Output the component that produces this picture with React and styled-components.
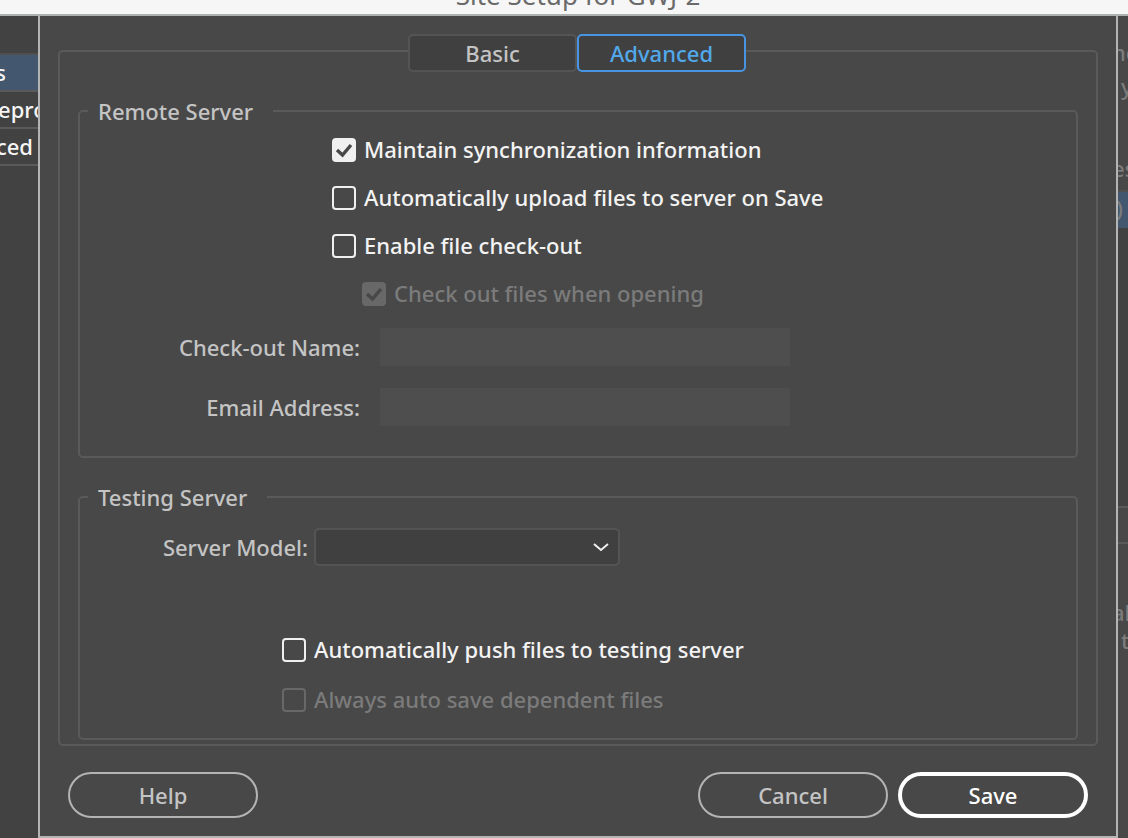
import React from "react";
import styled, { createGlobalStyle } from "styled-components";

const GlobalStyle = createGlobalStyle`
  *, *::before, *::after { box-sizing: border-box; }
  html { background: #484848; }
  body {
    margin: 0;
    overflow: hidden;
    font-family: "Noto Sans", "Open Sans", sans-serif;
    font-size: 22px;
    line-height: 28px;
    color: #c4c4c4;
  }
  button, input, select { font: inherit; color: inherit; }
`;

const Page = styled.div`
  display: flex;
  flex-direction: column;
  min-height: 100vh;
`;

const TitleBar = styled.header`
  display: flex;
  align-items: flex-end;
  justify-content: center;
  height: 16px;
  padding-bottom: 5px;
  overflow: hidden;
  background: #f6f6f6;
  border-bottom: 2px solid #adb1b0;
  color: #6a6a6a;
`;

const Title = styled.h1`
  margin: 0;
  padding-left: 28px;
  font-size: 26px;
  line-height: 28px;
  font-weight: 400;
`;

const Workspace = styled.div`
  flex: 1;
  display: grid;
  grid-template-columns: 38px minmax(0, 1fr) 10px;
`;

const Sidebar = styled.nav`
  padding-top: 37px;
  overflow: hidden;
  background: #424242;
`;

const SidebarList = styled.ul`
  margin: 0;
  padding: 0;
  list-style: none;
  border-top: 2px solid #505050;
`;

const SidebarItem = styled.li`
  display: flex;
  justify-content: ${(p) => p.$align || "flex-start"};
  height: 37px;
  padding: 3px ${(p) => p.$inset || 0}px 0 0;
  overflow: hidden;
  white-space: nowrap;
  border-bottom: 2px solid #5a5a5a;
  background: ${(p) => (p.$active ? "#43586f" : "transparent")};
  color: #f5f5f5;
  font-weight: 500;
  text-indent: -2px;
`;

const Backdrop = styled.aside`
  overflow: hidden;
  background: #484848;
  color: #7c7c7c;
  white-space: nowrap;
  font-weight: 500;
`;

const BackdropText = styled.p`
  margin: 0;
  padding-top: ${(p) => p.$gap}px;
  text-indent: ${(p) => (p.$inset ? 3 : -6)}px;
`;

const BackdropSelection = styled.div`
  height: 38px;
  margin-top: 8px;
  padding-top: 2px;
  border-top: 2px solid #505050;
  background: #43586f;
  text-indent: -2px;
`;

const BackdropList = styled.div`
  height: 278px;
  background: #424242;
`;

const BackdropToolbar = styled.div`
  height: 38px;
  border: solid #5a5a5a;
  border-width: 2px 0;
`;

const Dialog = styled.form`
  display: flex;
  flex-direction: column;
  padding: 34px 18px 0;
  background: #484848;
  border: 2px solid #b4b4b4;
  border-top: 0;
`;

const Frame = styled.section`
  flex: 1;
  display: flex;
  flex-direction: column;
  gap: 25px;
  padding: 0 18px 4px;
  border: 2px solid #5a5a5a;
  border-radius: 5px;
`;

const Tabs = styled.div`
  display: flex;
  align-self: center;
  margin: -18px 2px 0 0;
  background: #484848;
`;

const Tab = styled.button`
  width: 169px;
  height: 38px;
  padding: 0;
  border: 2px solid ${(p) => (p.$active ? "#4795e2" : "#545454")};
  border-radius: 5px;
  background: #404040;
  color: ${(p) => (p.$active ? "#51a8ea" : "#c4c4c4")};
  font-weight: 500;
`;

const Group = styled.fieldset`
  display: flex;
  flex-direction: column;
  min-width: 0;
  margin: 0;
  padding: ${(p) => p.$padding};
  border: 2px solid #5a5a5a;
  border-radius: 5px;
`;

const Legend = styled.legend`
  margin-left: 8px;
  padding: 0 20px 0 10px;
  font-weight: 500;
`;

const CheckList = styled.div`
  display: flex;
  flex-direction: column;
  gap: ${(p) => p.$gap}px;
  padding-left: ${(p) => p.$indent}px;
`;

const CheckRow = styled.label`
  display: flex;
  align-items: flex-start;
  gap: 8px;
  height: 24px;
  margin-left: ${(p) => (p.$nested ? 30 : 0)}px;
  color: ${(p) => (p.$disabled ? "#7b7b7b" : "#f3f3f3")};
  font-weight: 500;
  line-height: 22px;
  white-space: nowrap;
`;

const CheckSlot = styled.span`
  display: grid;
  width: 24px;
  height: 24px;

  > * { grid-area: 1 / 1; }
`;

const CheckInput = styled.input`
  appearance: none;
  width: 24px;
  height: 24px;
  margin: 0;
  border: 2px solid #f0f0f0;
  border-radius: 4px;

  &:checked { background: #f0f0f0; }
  &:disabled { border-color: #686868; }
  &:disabled:checked { background: #686868; }
`;

const Tick = styled.svg`
  width: 24px;
  height: 24px;
  pointer-events: none;
`;

const FieldRow = styled.div`
  display: grid;
  grid-template-columns: 280px 410px;
  gap: 20px;
  align-items: center;
  margin-top: 22px;
`;

const FieldLabel = styled.label`
  text-align: right;
  font-weight: 500;
  white-space: nowrap;
`;

const TextInput = styled.input`
  width: 100%;
  height: 38px;
  padding: 0 8px;
  border: 0;
  background: #4e4e4e;
`;

const ModelRow = styled.div`
  display: grid;
  grid-template-columns: 228px 306px;
  gap: 6px;
  align-items: center;
  margin-bottom: 72px;
`;

const SelectBox = styled.div`
  display: grid;
  align-items: center;

  > * { grid-area: 1 / 1; }
`;

const Select = styled.select`
  appearance: none;
  width: 100%;
  height: 38px;
  padding: 0 40px 0 8px;
  border: 2px solid #545454;
  border-radius: 5px;
  background: #404040;
`;

const Chevron = styled.svg`
  justify-self: end;
  width: 18px;
  height: 12px;
  margin-right: 10px;
  pointer-events: none;
`;

const Footer = styled.footer`
  display: flex;
  gap: 10px;
  padding: 26px 10px 18px;
`;

const PillButton = styled.button`
  width: 190px;
  height: 46px;
  padding: 0;
  border: ${(p) => (p.$primary ? "4px solid #ffffff" : "2px solid #b4b4b4")};
  border-radius: 23px;
  background: transparent;
  color: ${(p) => (p.$primary ? "#ffffff" : "#c4c4c4")};
  font-weight: 500;
  margin-right: ${(p) => (p.$leading ? "auto" : 0)};
`;

function Check({ label, nested, disabled, defaultChecked }) {
  return (
    <CheckRow $nested={nested} $disabled={disabled}>
      <CheckSlot>
        <CheckInput type="checkbox" disabled={disabled} defaultChecked={defaultChecked} />
        {defaultChecked && (
          <Tick viewBox="0 0 24 24" aria-hidden="true">
            <path d="M5 12 L10.5 17 L19 7" fill="none" stroke="#484848" strokeWidth="3.4" />
          </Tick>
        )}
      </CheckSlot>
      {label}
    </CheckRow>
  );
}

export default function App() {
  return (
    <Page>
      <GlobalStyle />
      <TitleBar>
        <Title>Site Setup for GWJ-2</Title>
      </TitleBar>
      <Workspace>
        <Sidebar>
          <SidebarList>
            <SidebarItem $active $align="flex-end" $inset={32}>s</SidebarItem>
            <SidebarItem>epro</SidebarItem>
            <SidebarItem $align="flex-end" $inset={5}>ced</SidebarItem>
          </SidebarList>
        </Sidebar>
        <Dialog onSubmit={(e) => e.preventDefault()}>
          <Frame>
            <Tabs>
              <Tab type="button">Basic</Tab>
              <Tab type="button" $active>Advanced</Tab>
            </Tabs>
            <Group $padding="13px 0 30px">
              <Legend>Remote Server</Legend>
              <CheckList $gap={24} $indent={252}>
                <Check label="Maintain synchronization information" defaultChecked />
                <Check label="Automatically upload files to server on Save" />
                <Check label="Enable file check-out" />
                <Check label="Check out files when opening" nested disabled defaultChecked />
              </CheckList>
              <FieldRow>
                <FieldLabel htmlFor="checkout-name">Check-out Name:</FieldLabel>
                <TextInput id="checkout-name" type="text" disabled />
              </FieldRow>
              <FieldRow>
                <FieldLabel htmlFor="email">Email Address:</FieldLabel>
                <TextInput id="email" type="email" disabled />
              </FieldRow>
            </Group>
            <Group $padding="17px 0 26px">
              <Legend>Testing Server</Legend>
              <ModelRow>
                <FieldLabel htmlFor="server-model">Server Model:</FieldLabel>
                <SelectBox>
                  <Select id="server-model" defaultValue="">
                    <option value="" />
                  </Select>
                  <Chevron viewBox="0 0 18 12" aria-hidden="true">
                    <path d="M2 3 L9 9 L16 3" fill="none" stroke="#f0f0f0" strokeWidth="2" />
                  </Chevron>
                </SelectBox>
              </ModelRow>
              <CheckList $gap={26} $indent={202}>
                <Check label="Automatically push files to testing server" />
                <Check label="Always auto save dependent files" disabled />
              </CheckList>
            </Group>
          </Frame>
          <Footer>
            <PillButton type="button" $leading>Help</PillButton>
            <PillButton type="button">Cancel</PillButton>
            <PillButton type="submit" $primary>Save</PillButton>
          </Footer>
        </Dialog>
        <Backdrop>
          <BackdropText $gap={22}>ne</BackdropText>
          <BackdropText $gap={6} $inset>y</BackdropText>
          <BackdropText $gap={54}>es</BackdropText>
          <BackdropSelection>)</BackdropSelection>
          <BackdropList />
          <BackdropToolbar />
          <BackdropText $gap={54}>ab</BackdropText>
          <BackdropText $gap={0} $inset>t</BackdropText>
        </Backdrop>
      </Workspace>
    </Page>
  );
}
